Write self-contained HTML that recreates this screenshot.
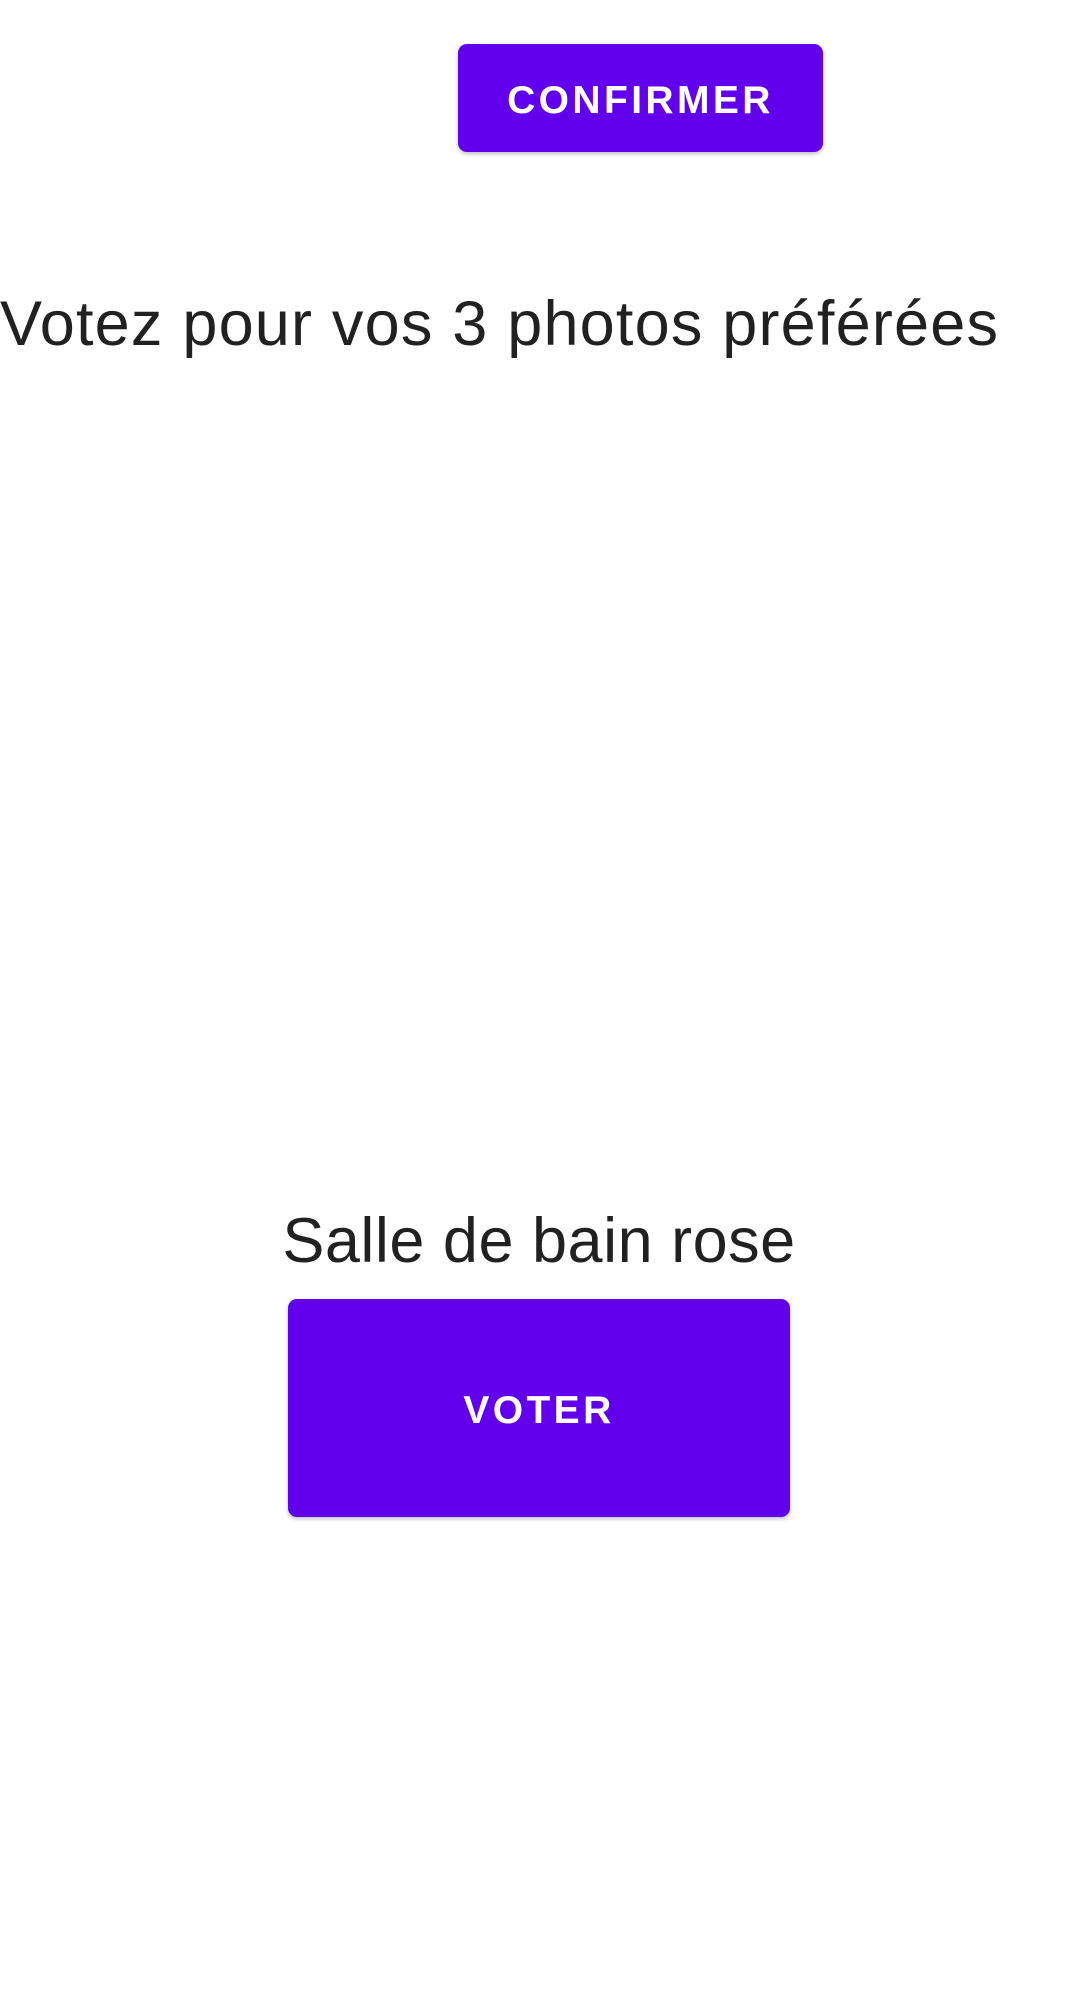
<!DOCTYPE html>
<html><head><meta charset="utf-8"><style>
html,body{margin:0;padding:0;background:#fff;width:1072px;height:2016px;overflow:hidden;font-family:"Liberation Sans",sans-serif;}
.btn{position:absolute;background:#6200EE;color:#fff;border-radius:9px;box-shadow:0 2px 4px rgba(0,0,0,0.25);display:flex;align-items:center;justify-content:center;font-size:39px;letter-spacing:3.4px;font-weight:bold;padding-top:5px;box-sizing:border-box;}
.t{position:absolute;color:#212121;font-size:63px;white-space:nowrap;line-height:1;}
</style></head><body>
<div class="btn" style="left:458px;top:44px;width:365px;height:108px;">CONFIRMER</div>
<div class="t" style="left:0;top:293px;letter-spacing:1.2px;">Votez pour vos 3 photos préférées</div>
<div class="t" style="left:3px;width:1072px;text-align:center;top:1210px;letter-spacing:0.5px;">Salle de bain rose</div>
<div class="btn" style="left:288px;top:1299px;width:502px;height:218px;">VOTER</div>
</body></html>
